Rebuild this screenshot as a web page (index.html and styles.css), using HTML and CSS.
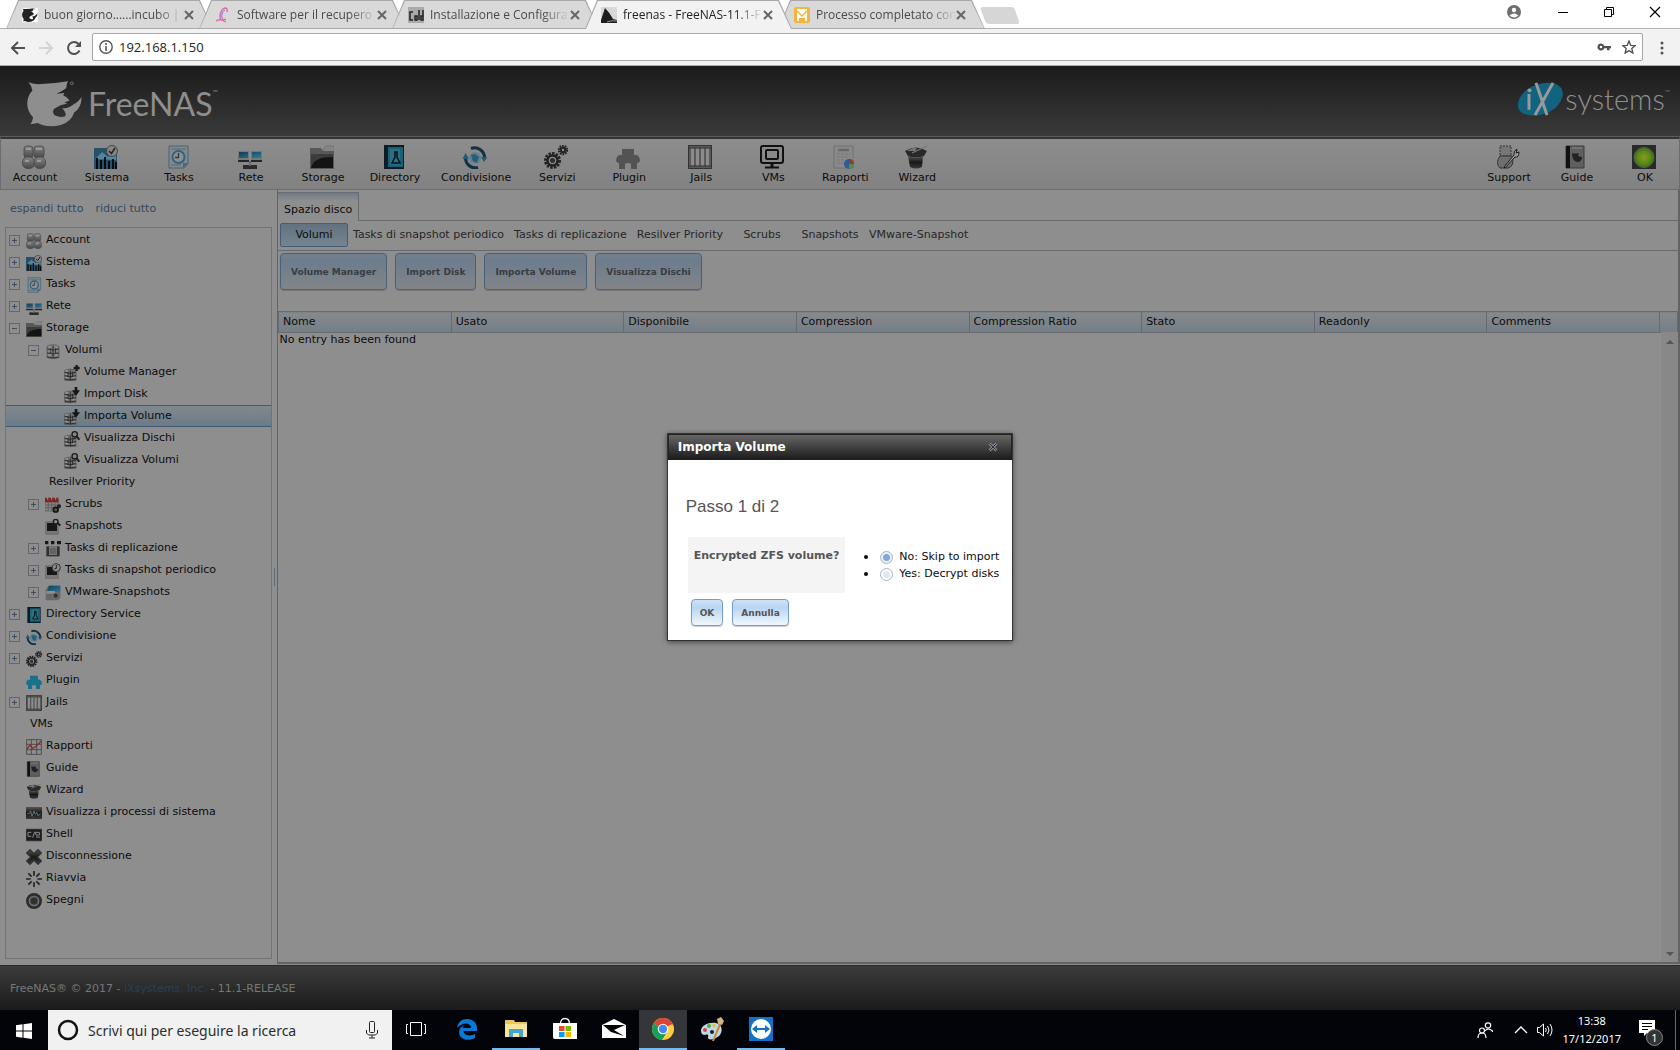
FILE: index.html
```html
<!DOCTYPE html>
<html lang="it">
<head>
    <meta charset="UTF-8">
    <meta name="viewport" content="width=device-width, initial-scale=1.0">
    <title>freenas - FreeNAS-11.1-RELEASE</title>
    <link rel="stylesheet" href="styles.css">
</head>
<body>
    <!-- icon set shared by the menu and the tree -->
    <svg class="sprite" width="0" height="0" aria-hidden="true">
        <defs>
            <linearGradient id="g-dark" x1="0" y1="0" x2="0" y2="1"><stop offset="0" stop-color="#555"/><stop offset=".5" stop-color="#181818"/><stop offset="1" stop-color="#3a3a3a"/></linearGradient>
            <linearGradient id="g-grey" x1="0" y1="0" x2="0" y2="1"><stop offset="0" stop-color="#858585"/><stop offset="1" stop-color="#484848"/></linearGradient>
            <linearGradient id="g-blue" x1="0" y1="0" x2="1" y2="1"><stop offset="0" stop-color="#123c52"/><stop offset="1" stop-color="#2a7d9c"/></linearGradient>
            <radialGradient id="g-led"><stop offset="0" stop-color="#8a991f"/><stop offset=".6" stop-color="#5c8c16"/><stop offset="1" stop-color="#3f6d16"/></radialGradient>
        </defs>
        <symbol id="i-account" viewBox="0 0 24 24">
            <g fill="url(#g-grey)" stroke="#454545" stroke-width=".8"><rect x="2" y="1" width="9" height="12" rx="3"/><rect x="12" y="1" width="10" height="12" rx="3"/><rect x=".5" y="12" width="12" height="11.500" rx="5"/><rect x="12" y="12" width="11.500" height="11.500" rx="5"/></g>
            <path d="M4 4h5M14 4h6M3 16h4M15 16h4" stroke="#999" stroke-width="2"/>
        </symbol>
        <symbol id="i-sistema" viewBox="0 0 24 24">
            <path d="M0 3h23v21H0z" fill="#27516b"/><path d="M1 14L8 7l6 5 8-6v9z" fill="#5186a0"/>
            <path d="M2 24V13h2v11M6 24V15h2v9M10 24V12h2v12M14 24V16h2v8M18 24V14h2v10M21 24V17h2v7" fill="#0c0c0c"/>
            <circle cx="18" cy="6" r="5.500" fill="#858585" stroke="#444"/><path d="M15 6l2.500 2.500L21 3" fill="none" stroke="#222" stroke-width="1.500"/>
        </symbol>
        <symbol id="i-tasks" viewBox="0 0 24 24">
            <path d="M3 1h19v18l-4 4H3z" fill="#83898c" stroke="#4a6270"/><path d="M5 4h15M5 20h10" stroke="#4f6b79"/>
            <circle cx="12.500" cy="12" r="6" fill="#8c9294" stroke="#2e647f" stroke-width="2"/><path d="M12.500 8v4.500H9" fill="none" stroke="#333" stroke-width="1.300"/><path d="M22 18h-5v5z" fill="#2b6f8e"/>
        </symbol>
        <symbol id="i-rete" viewBox="0 0 24 24">
            <path d="M0 6h11v9H0zM13 6h11v9H13z" fill="#777"/><path d="M1 7h9v6H1zM14 7h9v6h-9z" fill="url(#g-blue)"/>
            <path d="M0 15h11v2H0zM13 15h11v2H13z" fill="#262626"/><path d="M5 20h14v4H5z" fill="#2a2a2a"/><path d="M11 16h2v5h-2z" fill="#666"/>
        </symbol>
        <symbol id="i-storage" viewBox="0 0 24 24">
            <path d="M14 3l2-2h8v8H13z" fill="#858585" stroke="#666" stroke-width=".6"/><path d="M0 3h11l2 3h11v18H0z" fill="#585858"/>
            <path d="M1 9h22v14H1z" fill="#3c3c3c"/><path d="M1 23c2-8 9-11 22-11v11z" fill="#141414"/>
        </symbol>
        <symbol id="i-directory" viewBox="0 0 24 24">
            <path d="M2 0h20v24H2z" fill="#0d1c24"/><path d="M6 2h15v20H6z" fill="#176078"/><path d="M8 4h10v16H8z" fill="#2a7186"/>
            <path d="M12 7h4M13 7v5l-3 6h8l-3-6V7" fill="none" stroke="#101010" stroke-width="1.500"/>
        </symbol>
        <symbol id="i-condivisione" viewBox="0 0 24 24">
            <circle cx="12" cy="13" r="6" fill="#6b7f89"/><path d="M8 10l4-1 4 3-2 6-4-2z" fill="#1f6181"/>
            <path d="M8 3.500a10 10 0 0 1 13.500 10M15 22.500A10 10 0 0 1 2.500 12" fill="none" stroke="#103243" stroke-width="3"/>
            <path d="M18 12h6.500l-3.500 5zM-.5 14H6L2.500 8z" fill="#1c5c7c"/>
        </symbol>
        <symbol id="i-servizi" viewBox="0 0 24 24">
            <g fill="none" stroke="#222"><circle cx="8.500" cy="15.500" r="7" stroke-width="3" stroke-dasharray="2.400 1.200"/><circle cx="8.500" cy="15.500" r="5" stroke-width="2.500"/><circle cx="8.500" cy="15.500" r="2" fill="#333"/><circle cx="19" cy="5" r="4" stroke-width="2.500" stroke-dasharray="1.600 .9"/><circle cx="19" cy="5" r="2.200" stroke-width="2"/></g>
        </symbol>
        <symbol id="i-plugin" viewBox="0 0 24 24">
            <path fill="currentColor" d="M6 4h12v6h3q3 2 3 6-1 2-3 2v6h-6v-5q-3-2-6 0v5H3v-6q-2 0-3-2 0-4 3-6h3z"/>
        </symbol>
        <symbol id="i-jails" viewBox="0 0 24 24">
            <path d="M0 0h24v24H0z" fill="#5a5a5a"/><path d="M3 3h3v18H3zM8 3h3v18H8zM13 3h3v18h-3zM18 3h3v18h-3z" fill="#8b8b8b"/>
            <path d="M.5.5h23v23H.5zM1 3h22M1 21h22" fill="none" stroke="#333"/>
        </symbol>
        <symbol id="i-vms" viewBox="0 0 24 24">
            <g fill="none" stroke="#111"><rect x="1" y="1" width="22" height="17" rx="2" stroke-width="2"/><rect x="6" y="5" width="12" height="9" rx="1" stroke-width="2"/><path d="M5 22.500h14" stroke-width="2"/><path d="M12 18v4" stroke-width="3"/></g>
        </symbol>
        <symbol id="i-rapporti" viewBox="0 0 24 24">
            <path d="M2 1h19v22H2z" fill="#898989" stroke="#707070"/><path d="M6 5h11" stroke="#686868" stroke-width="2.500"/><path d="M5 9h13M5 12h13M5 15h8M5 18h7" stroke="#777" stroke-dasharray="3 1"/>
            <circle cx="17" cy="19" r="5" fill="#2d5d92"/><path d="M17 19v-5a5 5 0 0 1 5 5z" fill="#963a37"/><path d="M17 19h5a5 5 0 0 1-5 5z" fill="#578d46"/>
        </symbol>
        <symbol id="i-chart" viewBox="0 0 24 24">
            <path d="M1 1h22v22H1zM1 8h22M1 16h22M8 1v22M16 1v22" fill="none" stroke="#444" stroke-width="1.300"/><path d="M1 16l5-7 4 5 5-3 8-8" fill="none" stroke="#8d2d2b" stroke-width="2"/>
        </symbol>
        <symbol id="i-wizard" viewBox="0 0 24 24">
            <path d="M1 6q11-7 22 0l-3 5q-8 3-16 0z" fill="#292929"/><path d="M4 11q8 3 15 0l-1 11q-6 3-12 0z" fill="url(#g-dark)"/><path d="M3 6q7-4 10-3l-2 3z" fill="#777"/><path d="M8 8L23 1" stroke="#777" stroke-width="1.300"/>
        </symbol>
        <symbol id="i-guide" viewBox="0 0 24 24">
            <path d="M2 1h18v22H2z" fill="#5f5f5f" stroke="#3c3c3c"/><path d="M2 1h4v22H2z" fill="#111"/><path d="M8 8q3 1 7 0l-1 3 4 1q0 5-5 5-5-1-5-9z" fill="#222"/><path d="M8 3h10" stroke="#8a8a8a"/>
        </symbol>
        <symbol id="i-support" viewBox="0 0 24 24">
            <path d="M4 1h11v10H4z" fill="#777" stroke="#333" stroke-dasharray="2 1"/><path d="M4 11h12q3 10-4 12H4q-5-5 0-12z" fill="#6f6f6f" stroke="#333"/>
            <path d="M8 22L18 10q-1-4 3-6l-1 4 3-1q0 6-4 5L9 23z" fill="#999" stroke="#1c1c1c"/>
        </symbol>
        <symbol id="i-led" viewBox="0 0 24 24">
            <path d="M0 0h24v24H0z" fill="#292929"/><circle cx="12" cy="12.500" r="10" fill="url(#g-led)" stroke="#526052"/>
        </symbol>
        <symbol id="i-disks" viewBox="0 0 24 24">
            <path d="M3 5q9-5 18 0v17q-9 3-18 0z" fill="#777" stroke="#555"/><path d="M3 9q9 3 18 0M3 15q9 3 18 0M3 21q9 3 18 0M12 5v17M8 8v8M16 8v8" fill="none" stroke="#333" stroke-width="1.500"/><path d="M5 6h4M5 12h3M5 18h4M15 6h4M17 12h2M15 18h4" stroke="#999" stroke-width="2"/>
        </symbol>
        <symbol id="i-vol" viewBox="0 0 24 24">
            <path d="M1 8q8-4 17 0v15q-9 2-17 0z" fill="#737373" stroke="#555"/><path d="M1 11q8 3 17 0M1 16q8 3 17 0M1 21q8 3 17 0M9.500 8v15M6 10v8M13 10v8" fill="none" stroke="#2c2c2c" stroke-width="1.500"/><path d="M2 9h4M2 14h3M2 19h4M13 19h4" stroke="#999" stroke-width="2"/>
        </symbol>
        <symbol id="i-vol-add" viewBox="0 0 24 24"><use href="#i-vol"/><path d="M19 0v9M14.500 4.500h9" stroke="#1a1a1a" stroke-width="3.500"/></symbol>
        <symbol id="i-vol-imp" viewBox="0 0 24 24"><use href="#i-vol"/><path d="M16 0h4v5h4l-6 8-6-8h4z" fill="#151515"/></symbol>
        <symbol id="i-vol-view" viewBox="0 0 24 24"><use href="#i-vol"/><circle cx="16" cy="5" r="4" fill="#858585" stroke="#1a1a1a" stroke-width="2"/><path d="M19 8l4 5" stroke="#1a1a1a" stroke-width="3"/></symbol>
        <symbol id="i-scrubs" viewBox="0 0 24 24">
            <path d="M0 3h20v18H0z" fill="#858585" stroke="#555"/><path d="M0 1h20v7H0z" fill="#812525"/><path d="M4 0v4M10 0v4M16 0v4" stroke="#999" stroke-width="1.500"/><path d="M1 12h18M1 16h18M5 8v12M10 8v12M15 8v12" stroke="#555"/><circle cx="16" cy="19" r="3.500" fill="#555" stroke="#151515" stroke-width="2.500"/><circle cx="21" cy="14" r="2" fill="#555" stroke="#151515" stroke-width="2"/>
        </symbol>
        <symbol id="i-snap" viewBox="0 0 24 24"><path d="M1 4h19v19H1z" fill="#777" stroke="#666"/><path d="M3 6h15v12H3z" fill="#171717"/></symbol>
        <symbol id="i-snap-view" viewBox="0 0 24 24"><use href="#i-snap"/><circle cx="16" cy="4" r="3.500" fill="#888" stroke="#1a1a1a" stroke-width="2"/><path d="M19 6l4 4" stroke="#1a1a1a" stroke-width="3"/></symbol>
        <symbol id="i-snap-time" viewBox="0 0 24 24"><use href="#i-snap"/><circle cx="17" cy="7" r="6" fill="#8a8a8a" stroke="#333" stroke-width="1.500"/><path d="M17 3v5l-3 1" fill="none" stroke="#222" stroke-width="1.500"/></symbol>
        <symbol id="i-repl" viewBox="0 0 24 24"><path d="M0 0h5v5H0zM9 0h5v5H9zM18 0h6v5h-6z" fill="#161616"/><path d="M2 8h20v15H2z" fill="#303030"/><path d="M6 8h12v13H6z" fill="#7b7b7b"/><path d="M7 12h10M7 15h10M7 18h10" stroke="#333"/></symbol>
        <symbol id="i-vmware" viewBox="0 0 24 24"><path d="M1 7l4-6h18v19l-4 3H1z" fill="#686868"/><path d="M6 1h17v10H3z" fill="url(#g-blue)"/><path d="M2 9h13v4H2z" fill="#8f8f8f"/><circle cx="16" cy="16" r="4" fill="#333" stroke="#888"/></symbol>
        <symbol id="i-proc" viewBox="0 0 24 24"><path d="M0 3h24v18H0z" fill="url(#g-dark)"/><path d="M2 13h3l2-4 2 8 3-8 2 5 2-3 2 5 4-3" fill="none" stroke="#59777a" stroke-width="1.500"/></symbol>
        <symbol id="i-shell" viewBox="0 0 24 24"><path d="M0 3h24v18H0z" fill="#1c1c1c" stroke="#555"/><path d="M8 8H3v6h5M13 7l-3 9M14 8h6v4h-5zM15 15h6" fill="none" stroke="#8b8b8b" stroke-width="1.500"/></symbol>
        <symbol id="i-logout" viewBox="0 0 24 24"><path d="M6 1l6 6 6-6 5 5-6 6 6 6-5 5-6-6-6 6-5-5 6-6-6-6z" fill="url(#g-dark)" stroke="#333" stroke-width="2" stroke-linejoin="round"/></symbol>
        <symbol id="i-reboot" viewBox="0 0 24 24"><path d="M12 0v7M12 17v7M0 12h7M17 12h7M3.500 3.500l5 5M15.500 15.500l5 5M20.500 3.500l-5 5M8.500 15.500l-5 5" stroke="#242424" stroke-width="2.500"/></symbol>
        <symbol id="i-halt" viewBox="0 0 24 24"><circle cx="12" cy="12" r="10" fill="#8b8b8b" stroke="#2c2c2c" stroke-width="4"/><circle cx="12" cy="12" r="6" fill="#303030" stroke="#555" stroke-width="2"/></symbol>
        <symbol id="i-shark" viewBox="0 0 156 140" preserveAspectRatio="none">
            <path fill="currentColor" d="M4 7Q16 14 40 12 80 11 114 4 108 20 110 24 98 34 82 41L104 39 101 46Q114 52 118 62L104 66 112 70Q92 74 78 84 68 92 76 104 92 114 106 108 112 100 98 84 116 86 128 74 144 66 152 50 152 84 132 96 122 126 94 134 58 144 30 128L10 132Q16 120 17 112-4 88 2 58 6 40 15 32 14 18 4 7z"/>
            <circle cx="125" cy="10" r="4" fill="none" stroke="currentColor" stroke-width="2"/>
        </symbol>
    </svg>

    <div class="browser">
        <div class="tabstrip">
            <div class="tab">
                <svg class="favicon" viewBox="0 0 156 140"><path fill="#fff" d="M0 0h156v140H0z"/><use href="#i-shark" color="#222"/></svg>
                <span class="tab-title">buon giorno......incubo | F</span>
                <button class="tab-close" aria-label="Chiudi"><svg viewBox="0 0 10 10"><path d="M1 1l8 8M9 1L1 9"/></svg></button>
            </div>
            <div class="tab">
                <svg class="favicon" viewBox="0 0 16 16"><path d="M12 5q1-4-2-4-4 1-5 8 0 5 3 4M1 14q4-3 10 1" fill="none" stroke="#e66a9c" stroke-width="1.500"/><path d="M10 3Q6 5 7 11q1 3 4 1" fill="none" stroke="#7d77dc"/></svg>
                <span class="tab-title">Software per il recupero</span>
                <button class="tab-close" aria-label="Chiudi"><svg viewBox="0 0 10 10"><path d="M1 1l8 8M9 1L1 9"/></svg></button>
            </div>
            <div class="tab">
                <svg class="favicon" viewBox="0 0 16 16"><path d="M0 0h16v16H0z" fill="#aaa"/><path d="M5 5H2v8h3M7 9h2v4H7zM11 3v10M13 9h2v4h-2zM15 3v7" fill="none" stroke="#222" stroke-width="1.500"/></svg>
                <span class="tab-title">Installazione e Configura</span>
                <button class="tab-close" aria-label="Chiudi"><svg viewBox="0 0 10 10"><path d="M1 1l8 8M9 1L1 9"/></svg></button>
            </div>
            <div class="tab tab-active">
                <svg class="favicon" viewBox="0 0 16 16"><path d="M0 0h16v16H0z" fill="#d8d8d8"/><path d="M0 16V13L4 1q5 5 8 11l4 1v3z" fill="#1d1d1d"/><path d="M6 15q5-2 10-1" stroke="#999" fill="none"/></svg>
                <span class="tab-title">freenas - FreeNAS-11.1-F</span>
                <button class="tab-close" aria-label="Chiudi"><svg viewBox="0 0 10 10"><path d="M1 1l8 8M9 1L1 9"/></svg></button>
            </div>
            <div class="tab">
                <svg class="favicon" viewBox="0 0 16 16"><rect width="16" height="16" rx="2" fill="#f5b53d"/><path d="M3 2h10v12h-2v-3H5v3H3z" fill="#fff"/><path d="M3 4l5 5 5-5" fill="none" stroke="#f5b53d" stroke-width="1.500"/></svg>
                <span class="tab-title">Processo completato con</span>
                <button class="tab-close" aria-label="Chiudi"><svg viewBox="0 0 10 10"><path d="M1 1l8 8M9 1L1 9"/></svg></button>
            </div>
            <button class="new-tab" aria-label="Nuova scheda"></button>
            <div class="window-buttons">
                <button aria-label="Profilo"><svg viewBox="0 0 14 14"><circle cx="7" cy="7" r="7" fill="#6e6e6e"/><circle cx="7" cy="5" r="2.200" fill="#fff"/><path d="M2.500 10.500q4.500-4 9 0-4.500 4-9 0z" fill="#fff"/></svg></button>
                <button aria-label="Riduci a icona"><svg viewBox="0 0 14 14"><path d="M2 7.500h10" stroke="#000"/></svg></button>
                <button aria-label="Ripristina"><svg viewBox="0 0 14 14"><path d="M2.500 4.500h7v7h-7zM4.500 4.500v-2h7v7h-2" fill="none" stroke="#000"/></svg></button>
                <button aria-label="Chiudi finestra"><svg viewBox="0 0 14 14"><path d="M2 2l10 10M12 2L2 12" stroke="#000" stroke-width="1.200"/></svg></button>
            </div>
        </div>
        <div class="toolbar">
            <button class="tool" aria-label="Indietro"><svg viewBox="0 0 16 16"><path d="M15 8H2M8 2L2 8l6 6" fill="none" stroke="#4f4f4f" stroke-width="2"/></svg></button>
            <button class="tool" aria-label="Avanti"><svg viewBox="0 0 16 16"><path d="M1 8h13M8 2l6 6-6 6" fill="none" stroke="#d3d3d3" stroke-width="2"/></svg></button>
            <button class="tool" aria-label="Ricarica"><svg viewBox="0 0 16 16"><path d="M13.500 10.500A6 6 0 1 1 12.500 4" fill="none" stroke="#4f4f4f" stroke-width="2"/><path d="M15 1v6H9z" fill="#4f4f4f"/></svg></button>
            <div class="address">
                <svg viewBox="0 0 14 14"><circle cx="7" cy="7" r="6.200" fill="none" stroke="#555" stroke-width="1.400"/><path d="M7 6v5M7 3v2" stroke="#555" stroke-width="1.600"/></svg>
                <input class="url" type="text" aria-label="Indirizzo" value="192.168.1.150">
                <svg viewBox="0 0 14 14"><path d="M4 3.500a3.500 3.500 0 1 0 3.300 4.700H10v2h2.500v-2H14V6H7.300A3.500 3.500 0 0 0 4 3.500zM4 5.700a1.300 1.300 0 1 1 0 2.600 1.300 1.300 0 0 1 0-2.600z" fill="#4f4f4f"/></svg>
                <svg viewBox="0 0 14 14"><path d="M7 1l1.700 4.300 4.600.3-3.500 3 1.100 4.500L7 10.600l-3.900 2.500 1.100-4.500-3.500-3 4.600-.3z" fill="none" stroke="#4f4f4f" stroke-width="1.300"/></svg>
            </div>
            <button class="tool tool-menu" aria-label="Menu"><svg viewBox="0 0 16 16"><g fill="#4f4f4f"><circle cx="8" cy="3" r="1.500"/><circle cx="8" cy="8" r="1.500"/><circle cx="8" cy="13" r="1.500"/></g></svg></button>
        </div>
    </div>

    <div class="page">
        <header class="banner">
            <div class="brand"><svg class="shark"><use href="#i-shark"/></svg><span class="brand-name">FreeNAS<sup>™</sup></span></div>
            <div class="ix">
                <svg class="ix-mark" viewBox="0 0 46 38" preserveAspectRatio="none"><path d="M1 26C1 10 19 0 33 1c12 1 16 10 10 21S23 38 12 36C5 35 1 31 1 26z" fill="#11637f"/><path d="M12 13v17M19 1l11 35M36 1L18 36" stroke="#999" stroke-width="3"/><circle cx="12.500" cy="9" r="2" fill="#999"/></svg>
                <span class="ix-name">systems<sup>™</sup></span>
            </div>
        </header>

        <nav class="menu">
            <a href="#account"><svg><use href="#i-account"/></svg>Account</a>
            <a href="#sistema"><svg><use href="#i-sistema"/></svg>Sistema</a>
            <a href="#tasks"><svg><use href="#i-tasks"/></svg>Tasks</a>
            <a href="#rete"><svg><use href="#i-rete"/></svg>Rete</a>
            <a href="#storage"><svg><use href="#i-storage"/></svg>Storage</a>
            <a href="#directory"><svg><use href="#i-directory"/></svg>Directory</a>
            <a href="#condivisione"><svg><use href="#i-condivisione"/></svg>Condivisione</a>
            <a href="#servizi"><svg><use href="#i-servizi"/></svg>Servizi</a>
            <a href="#plugin"><svg class="plugin-grey"><use href="#i-plugin"/></svg>Plugin</a>
            <a href="#jails"><svg><use href="#i-jails"/></svg>Jails</a>
            <a href="#vms"><svg><use href="#i-vms"/></svg>VMs</a>
            <a href="#rapporti"><svg><use href="#i-rapporti"/></svg>Rapporti</a>
            <a href="#wizard"><svg><use href="#i-wizard"/></svg>Wizard</a>
            <span class="menu-right">
                <a href="#support"><svg><use href="#i-support"/></svg>Support</a>
                <a href="#guide"><svg><use href="#i-guide"/></svg>Guide</a>
                <a href="#alert"><svg><use href="#i-led"/></svg>OK</a>
            </span>
        </nav>

        <main class="main">
            <aside class="sidebar">
                <div class="tree-links"><a href="#expand">espandi tutto</a><a href="#collapse">riduci tutto</a></div>
                <ul class="tree">
                    <li><button class="exp plus" aria-label="Espandi"></button><svg><use href="#i-account"/></svg><a href="#t1">Account</a></li>
                    <li><button class="exp plus" aria-label="Espandi"></button><svg><use href="#i-sistema"/></svg><a href="#t2">Sistema</a></li>
                    <li><button class="exp plus" aria-label="Espandi"></button><svg><use href="#i-tasks"/></svg><a href="#t3">Tasks</a></li>
                    <li><button class="exp plus" aria-label="Espandi"></button><svg><use href="#i-rete"/></svg><a href="#t4">Rete</a></li>
                    <li><button class="exp" aria-label="Riduci"></button><svg><use href="#i-storage"/></svg><a href="#t5">Storage</a></li>
                    <li class="level-2"><button class="exp" aria-label="Riduci"></button><svg><use href="#i-disks"/></svg><a href="#t6">Volumi</a></li>
                    <li class="level-3 leaf"><svg><use href="#i-vol-add"/></svg><a href="#t7">Volume Manager</a></li>
                    <li class="level-3 leaf"><svg><use href="#i-vol-imp"/></svg><a href="#t8">Import Disk</a></li>
                    <li class="level-3 leaf selected"><svg><use href="#i-vol-imp"/></svg><a href="#t9">Importa Volume</a></li>
                    <li class="level-3 leaf"><svg><use href="#i-vol-view"/></svg><a href="#t10">Visualizza Dischi</a></li>
                    <li class="level-3 leaf"><svg><use href="#i-vol-view"/></svg><a href="#t11">Visualizza Volumi</a></li>
                    <li class="level-2 leaf"><a href="#t12">Resilver Priority</a></li>
                    <li class="level-2"><button class="exp plus" aria-label="Espandi"></button><svg><use href="#i-scrubs"/></svg><a href="#t13">Scrubs</a></li>
                    <li class="level-2 leaf"><svg><use href="#i-snap-view"/></svg><a href="#t14">Snapshots</a></li>
                    <li class="level-2"><button class="exp plus" aria-label="Espandi"></button><svg><use href="#i-repl"/></svg><a href="#t15">Tasks di replicazione</a></li>
                    <li class="level-2"><button class="exp plus" aria-label="Espandi"></button><svg><use href="#i-snap-time"/></svg><a href="#t16">Tasks di snapshot periodico</a></li>
                    <li class="level-2"><button class="exp plus" aria-label="Espandi"></button><svg><use href="#i-vmware"/></svg><a href="#t17">VMware-Snapshots</a></li>
                    <li><button class="exp plus" aria-label="Espandi"></button><svg><use href="#i-directory"/></svg><a href="#t18">Directory Service</a></li>
                    <li><button class="exp plus" aria-label="Espandi"></button><svg><use href="#i-condivisione"/></svg><a href="#t19">Condivisione</a></li>
                    <li><button class="exp plus" aria-label="Espandi"></button><svg><use href="#i-servizi"/></svg><a href="#t20">Servizi</a></li>
                    <li class="leaf"><svg class="plugin-blue"><use href="#i-plugin"/></svg><a href="#t21">Plugin</a></li>
                    <li><button class="exp plus" aria-label="Espandi"></button><svg><use href="#i-jails"/></svg><a href="#t22">Jails</a></li>
                    <li class="leaf"><a href="#t23">VMs</a></li>
                    <li class="leaf"><svg><use href="#i-chart"/></svg><a href="#t24">Rapporti</a></li>
                    <li class="leaf"><svg><use href="#i-guide"/></svg><a href="#t25">Guide</a></li>
                    <li class="leaf"><svg><use href="#i-wizard"/></svg><a href="#t26">Wizard</a></li>
                    <li class="leaf"><svg><use href="#i-proc"/></svg><a href="#t27">Visualizza i processi di sistema</a></li>
                    <li class="leaf"><svg><use href="#i-shell"/></svg><a href="#t28">Shell</a></li>
                    <li class="leaf"><svg><use href="#i-logout"/></svg><a href="#t29">Disconnessione</a></li>
                    <li class="leaf"><svg><use href="#i-reboot"/></svg><a href="#t30">Riavvia</a></li>
                    <li class="leaf"><svg><use href="#i-halt"/></svg><a href="#t31">Spegni</a></li>
                </ul>
            </aside>
            <div class="splitter"><span></span></div>
            <section class="content">
                <div class="pane-tabs"><a class="pane-tab" href="#spazio">Spazio disco</a></div>
                <div class="pane">
                    <div class="subtabs">
                        <a class="current" href="#volumi">Volumi</a>
                        <a href="#periodico">Tasks di snapshot periodico</a>
                        <a href="#replicazione">Tasks di replicazione</a>
                        <a href="#resilver">Resilver Priority</a>
                        <a href="#scrubs">Scrubs</a>
                        <a href="#snapshots">Snapshots</a>
                        <a href="#vmware">VMware-Snapshot</a>
                    </div>
                    <div class="actions">
                        <button>Volume Manager</button>
                        <button>Import Disk</button>
                        <button>Importa Volume</button>
                        <button>Visualizza Dischi</button>
                    </div>
                    <table class="grid">
                        <thead>
                            <tr><th>Nome</th><th>Usato</th><th>Disponibile</th><th>Compression</th><th>Compression Ratio</th><th>Stato</th><th>Readonly</th><th>Comments</th><th class="grid-end"></th></tr>
                        </thead>
                        <tbody>
                            <tr><td colspan="9">No entry has been found</td></tr>
                        </tbody>
                    </table>
                    <div class="scrollbar"><span class="arrow-up"></span><span class="arrow-down"></span></div>
                </div>
            </section>
        </main>

        <footer class="footer">
            <p>FreeNAS® © 2017 - <a href="#ixsystems">iXsystems, Inc.</a> - 11.1-RELEASE</p>
        </footer>

        <div class="overlay">
            <div class="dialog" role="dialog" aria-labelledby="dialog-title">
                <div class="dialog-bar">
                    <span id="dialog-title">Importa Volume</span>
                    <button class="dialog-close" aria-label="Chiudi"><svg viewBox="0 0 10 10"><path d="M1.500 1.500l7 7M8.500 1.500l-7 7" stroke="#7b8793" stroke-width="3"/><path d="M1.500 1.500l7 7M8.500 1.500l-7 7" stroke="#2c3136"/></svg></button>
                </div>
                <form class="dialog-body">
                    <h2>Passo 1 di 2</h2>
                    <div class="question">
                        <div class="question-label">Encrypted ZFS volume?</div>
                        <ul>
                            <li><input type="radio" name="encrypted" id="enc-no" checked><label for="enc-no">No: Skip to import</label></li>
                            <li><input type="radio" name="encrypted" id="enc-yes"><label for="enc-yes">Yes: Decrypt disks</label></li>
                        </ul>
                    </div>
                    <div class="dialog-buttons">
                        <button type="button">OK</button>
                        <button type="button">Annulla</button>
                    </div>
                </form>
            </div>
        </div>
    </div>

    <div class="taskbar">
        <button class="start" aria-label="Start"><svg viewBox="0 0 16 16"><path d="M0 2.200L6.500 1.300v6.200H0zM7.500 1.200L16 0v7.500H7.500zM0 8.500h6.500v6.200L0 13.800zM7.500 8.500H16V16l-8.500-1.200z" fill="#fff"/></svg></button>
        <div class="cortana">
            <svg class="ring" viewBox="0 0 22 22"><circle cx="11" cy="11" r="9" fill="none" stroke="#111" stroke-width="2.500"/></svg>
            <input type="text" aria-label="Ricerca" placeholder="Scrivi qui per eseguire la ricerca">
            <svg class="mic" viewBox="0 0 12 18"><rect x="3.500" y=".5" width="5" height="11" rx="1" fill="none" stroke="#222"/><path d="M.5 9v3l2 2h7l2-2V9M6 14v3M3 17h6" fill="none" stroke="#222"/></svg>
        </div>
        <div class="apps">
            <button aria-label="Visualizzazione attività"><svg viewBox="0 0 24 24"><path d="M6.500 5.500h11v13h-11zM4 7.500H2.500v9H4M20 7.500h1.500v9H20" fill="none" stroke="#fff"/></svg></button>
            <button aria-label="Edge"><svg viewBox="0 0 24 24"><path d="M2 11C3 5 7 2 12 2c6 0 10 4 10 9v3H8.500c0 4 6 6 11.500 3v4C12 25 4 22 4 15c0-3 2-5 5-6.500-.7 1-1 1.500-1 2.500h8c0-6-9-6-14 0z" fill="#0a78d6"/></svg></button>
            <button class="open" aria-label="Esplora file"><svg viewBox="0 0 24 24"><path d="M1 3h9l1 2h12v15H1z" fill="#e9c75f"/><path d="M1 7h22v13H1z" fill="#fbe59a"/><path d="M5 20v-8h14v8h-4v-4H9v4z" fill="#42a6cf"/></svg></button>
            <button aria-label="Store"><svg viewBox="0 0 24 24"><path d="M0 6h24v16H2q-2 0-2-2z" fill="#fff"/><path d="M7.500 7q0-5.500 4.500-5.500T16.500 7" fill="none" stroke="#fff" stroke-width="1.300"/><path d="M6 9h5.500v5H6z" fill="#e74b23"/><path d="M12.500 9H18v5h-5.500z" fill="#7db700"/><path d="M6 15h5.500v5H6z" fill="#00a1ee"/><path d="M12.500 15H18v5h-5.500z" fill="#fdb900"/></svg></button>
            <button aria-label="Posta"><svg viewBox="0 0 24 24"><path d="M0 8l12-6 12 6v13H0z" fill="#fff"/><path d="M1 8h22l-11 5 10 6-13-4z" fill="#000"/></svg></button>
            <button class="open active" aria-label="Chrome"><svg viewBox="0 0 24 24"><circle cx="12" cy="12" r="11" fill="#fc4"/><path d="M12 12L2.500 6.500A11 11 0 0 1 21.500 6.500z" fill="#da4537"/><path d="M12 12L2.500 6.500A11 11 0 0 0 11 23l5-8z" fill="#189e57"/><path d="M12 6.500h9.500l.5 1h-10z" fill="#da4537"/><circle cx="12" cy="12" r="5.300" fill="#fff"/><circle cx="12" cy="12" r="4.200" fill="#4a86ee"/></svg></button>
            <button aria-label="Paint"><svg viewBox="0 0 24 24"><path d="M1 14C1 8 9 5 16 6c7 2 7 9 3 13-6 5-12 4-11 1 1-2 0-3-3-2-2 0-4-1-4-4z" fill="#bedaea"/><circle cx="5" cy="13" r="2" fill="#d44545"/><circle cx="9" cy="9" r="2" fill="#55a84a"/><circle cx="14" cy="8.500" r="1.700" fill="#e9bd3e"/><circle cx="12" cy="15" r="2" fill="#16202a"/><path d="M12 24l7-17 2 1-7 16z" fill="#cd8735"/><path d="M18 7l-1-5 4-2 3 4-2 4z" fill="#dbb27f"/></svg></button>
            <button class="open" aria-label="TeamViewer"><svg viewBox="0 0 24 24"><path d="M0 0h24v24H0z" fill="#1570c8"/><circle cx="12" cy="12" r="10" fill="#fff"/><path d="M3 12l5-4v3h8V8l5 4-5 4v-3H8v3z" fill="#1570c8"/></svg></button>
        </div>
        <div class="tray">
            <svg viewBox="0 0 16 16"><g fill="none" stroke="#fff" stroke-width="1.200"><circle cx="11" cy="3.500" r="2.700"/><path d="M8 9q3-4 7.500 0V10"/><circle cx="5" cy="8.500" r="2.500"/><path d="M1 16q0-5 4-5t4 5"/></g></svg>
            <svg viewBox="0 0 16 16"><path d="M2 11l6-6 6 6" fill="none" stroke="#fff" stroke-width="1.300"/></svg>
            <svg viewBox="0 0 16 16"><path d="M.5 5.500h2l4-3.500v12l-4-3.500h-2zM8.500 6q1.500 2 0 4M10.500 4q3 4 0 8M13 2q4 6 0 12" fill="none" stroke="#fff"/></svg>
            <div class="clock">13:38<br>17/12/2017</div>
            <button class="notify" aria-label="Notifiche"><svg viewBox="0 0 16 16"><path d="M0 0h16v13H8l-3 3v-3H0z" fill="#fff"/><path d="M3 3.500h10M3 6.500h10M3 9.500h6" stroke="#000"/></svg><span class="badge">1</span></button>
            <span class="desktop"></span>
        </div>
    </div>
</body>
</html>
```

FILE: styles.css
```css
* {
    box-sizing: border-box;
}
body {
    margin: 0;
    min-height: 100vh;
    display: flex;
    flex-direction: column;
    font-family: "DejaVu Sans", Verdana, sans-serif;
    font-size: 11px;
    line-height: 14px;
    color: #0c0c0c;
    background: #8e8e8e;
}
a {
    color: inherit;
    text-decoration: none;
}
button {
    border: 0;
    padding: 0;
    background: none;
    font-family: inherit;
    cursor: pointer;
}
input {
    font-family: inherit;
}
ul {
    margin: 0;
    padding: 0;
    list-style: none;
}
.sprite {
    position: absolute;
}

/* browser window */
.browser {
    font-family: "Open Sans", "Noto Sans", sans-serif;
}
.tabstrip {
    display: flex;
    height: 29px;
    padding-left: 6px;
    background: #fff;
    border-bottom: 1px solid #b4b4b4;
}
.tab {
    position: relative;
    z-index: 0;
    display: flex;
    align-items: center;
    width: 207px;
    height: 29px;
    margin-right: -14px;
    padding: 0 17px 0 16px;
    color: #4a4a4a;
}
.tab::before,
.tab::after {
    content: "";
    position: absolute;
    inset: 0;
    z-index: -1;
    background: #a9a9a9;
    clip-path: polygon(0 100%, 12px 0, calc(100% - 13px) 0, 100% 100%);
}
.tab::after {
    inset: 1px;
    background: #d9d9d9;
}
.tab-active {
    z-index: 1;
    color: #222;
}
.tab-active::after {
    inset: 1px 1px 0 1px;
    background: #f2f2f2;
}
.favicon {
    flex: none;
    width: 16px;
    height: 16px;
    margin-right: 6px;
}
.tab-title {
    flex: 1;
    min-width: 0;
    white-space: nowrap;
    font-size: 12px;
    line-height: 18px;
    mask-image: linear-gradient(to right, #000 80%, transparent);
}
.tab-close {
    flex: none;
    width: 10px;
    height: 10px;
    margin: 0 2px 0 0;
}
.tab-close svg {
    display: block;
    stroke: #666;
    stroke-width: 2;
}
.new-tab {
    width: 34px;
    height: 17px;
    margin: 7px 0 0 12px;
    background: #d6d6d6;
    border-radius: 3px;
    transform: skewX(20deg);
}
.window-buttons {
    display: flex;
    margin: 0 2px 0 auto;
}
.window-buttons button {
    width: 46px;
    height: 27px;
}
.window-buttons button:first-child {
    margin-right: 3px;
}
.window-buttons svg {
    width: 14px;
    height: 14px;
}
.toolbar {
    display: flex;
    align-items: center;
    height: 37px;
    padding: 0 4px;
    background: #f2f2f2;
    border-bottom: 1px solid #aaa;
}
.tool {
    width: 28px;
    height: 28px;
}
.tool svg {
    width: 16px;
    height: 16px;
    vertical-align: middle;
}
.address {
    flex: 1;
    display: flex;
    align-items: center;
    gap: 6px;
    height: 28px;
    margin-left: 4px;
    padding: 0 6px;
    background: #fff;
    border: 1px solid #a6a6a6;
    border-radius: 2px;
}
.address svg {
    width: 14px;
    height: 14px;
}
.address svg:last-child {
    margin-left: 5px;
}
.url {
    flex: 1;
    border: 0;
    padding: 0;
    font-size: 13px;
    color: #222;
    outline: none;
}
.tool-menu {
    margin-left: 5px;
}

/* banner */
.page {
    position: relative;
    flex: 1;
    display: flex;
    flex-direction: column;
}
.banner {
    display: flex;
    justify-content: space-between;
    height: 71px;
    padding: 0 10px 0 27px;
    color: #8e8e8e;
    background: linear-gradient(#1b1b1b, #3a3a3a);
    border-bottom: 1px solid #5b5b5b;
    font-family: Lato, sans-serif;
}
.brand,
.ix {
    display: flex;
    align-items: center;
}
.brand {
    padding-top: 4px;
}
.shark {
    width: 56px;
    height: 47px;
    margin-right: 5px;
}
.brand-name {
    font-size: 32px;
    line-height: 47px;
}
.ix {
    padding-bottom: 4px;
}
.ix-name {
    font-size: 29px;
    font-weight: 300;
    line-height: 38px;
    margin-left: 2px;
}
.banner sup {
    font-size: 7px;
    vertical-align: top;
    line-height: 24px;
}
.ix-mark {
    width: 46px;
    height: 35px;
}

/* icon menu */
.menu {
    display: flex;
    height: 53px;
    border: 1px solid #6c6d70;
    border-top: 2px solid #343434;
    background: linear-gradient(#8d8d8d, #828282);
}
.menu a {
    display: flex;
    flex-direction: column;
    align-items: center;
    gap: 2px;
    min-width: 72px;
    padding: 6px 12px 0 8px;
}
.menu svg {
    width: 24px;
    height: 24px;
    margin-right: 3px;
}
.menu-right {
    display: flex;
    margin-left: auto;
}
.menu .menu-right a {
    min-width: 68px;
    padding: 6px 11px 0;
}
.plugin-grey {
    color: #535353;
}
.plugin-blue {
    color: #18718d;
}

/* sidebar */
.main {
    flex: 1;
    display: flex;
    padding-bottom: 1px;
}
.sidebar {
    display: flex;
    flex-direction: column;
    width: 272px;
    padding: 0 0 5px 5px;
}
.tree-links {
    display: flex;
    gap: 12px;
    height: 37px;
    padding: 12px 5px 0;
    color: #34495f;
}
.tree {
    flex: 1;
    padding-top: 1px;
    border: 1px solid #6f7276;
}
.tree li {
    display: flex;
    align-items: center;
    height: 22px;
    padding-left: 3px;
}
.tree li.leaf {
    padding-left: 20px;
}
.tree li.level-2 {
    padding-left: 22px;
}
.tree li.level-2.leaf {
    padding-left: 39px;
}
.tree li.level-3.leaf {
    padding-left: 58px;
}
.tree svg {
    width: 16px;
    height: 16px;
    margin-top: 1px;
}
.tree a {
    margin-left: 4px;
}
.tree li.selected {
    border: solid #3f5a72;
    border-width: 1px 0;
    background: linear-gradient(#808990, #6c7a87);
}
.exp {
    width: 11px;
    height: 11px;
    margin-right: 6px;
    border: 1px solid #62676f;
    background: linear-gradient(#3f4c5d, #3f4c5d) center / 5px 1px no-repeat;
}
.exp.plus {
    background: linear-gradient(#3f4c5d, #3f4c5d) center / 5px 1px no-repeat, linear-gradient(#3f4c5d, #3f4c5d) center / 1px 5px no-repeat;
}
.splitter {
    display: flex;
    align-items: center;
    width: 5px;
}
.splitter span {
    width: 1px;
    height: 18px;
    margin-left: 2px;
    background: #5c6c7b;
}

/* content pane */
.content {
    flex: 1;
    display: flex;
    flex-direction: column;
    padding-top: 2px;
    border: 2px solid #646464;
    border-width: 0 2px 2px 1px;
}
.pane-tabs {
    display: flex;
    height: 29px;
    border-bottom: 1px solid #666b70;
}
.pane-tab {
    height: 29px;
    padding: 10px 6px 0;
    border: 1px solid #666b70;
    border-width: 1px 1px 0 0;
    background: linear-gradient(#707b86, #8e8e8e 8px);
}
.pane {
    position: relative;
    flex: 1;
}
.subtabs {
    display: flex;
    height: 30px;
    padding: 2px;
    border-bottom: 1px solid #666b70;
    color: #262626;
}
.subtabs a {
    min-width: 68px;
    height: 24px;
    padding: 4px;
    border: 1px solid transparent;
    text-align: center;
}
.subtabs .current {
    border-color: #465c70;
    border-radius: 2px;
    background: linear-gradient(#64727f, #748491);
    color: #0c0c0c;
}
.actions {
    display: flex;
    gap: 8px;
    padding: 2px 2px 21px;
}
.actions button,
.dialog-buttons button {
    height: 37px;
    padding: 0 10px;
    border: 1px solid #48607a;
    border-radius: 4px;
    background: linear-gradient(#74808d, #6d7c8c 20%, #828589);
    color: #383d42;
    font-size: 9px;
    font-weight: bold;
    box-shadow: 0 1px 1px #777;
}
.grid {
    width: 100%;
    table-layout: fixed;
    border-collapse: collapse;
}
.grid th {
    height: 21px;
    padding: 0 4px;
    border: 1px solid #666b70;
    background: linear-gradient(#868a8d, #757d86);
    font-weight: normal;
    text-align: left;
}
.grid .grid-end {
    width: 18px;
}
.grid td {
    padding: 0 1px;
    height: 15px;
}
.scrollbar {
    position: absolute;
    top: 111px;
    right: 0;
    bottom: 0;
    width: 17px;
    display: flex;
    flex-direction: column;
    align-items: center;
    justify-content: space-between;
    padding: 8px 0 6px;
    background: #888;
}
.arrow-up,
.arrow-down {
    border: 4px solid transparent;
    border-top: 0;
    border-bottom-color: #555;
}
.arrow-down {
    border-top: 4px solid #555;
    border-bottom: 0;
}

/* footer */
.footer {
    height: 45px;
    padding: 16px 10px 0;
    border-top: 1px solid #292929;
    background: linear-gradient(#3c3c3c, #1a1a1b);
    color: #777;
}
.footer p {
    margin: 0;
}
.footer a {
    color: #2c4055;
}

/* dialog */
.overlay {
    position: absolute;
    inset: 0;
    display: flex;
    align-items: center;
    justify-content: center;
    padding-bottom: 2px;
}
.dialog {
    background: #fff;
    border: 1px solid #333;
    box-shadow: 0 1px 5px #444;
}
.dialog-bar {
    display: flex;
    align-items: center;
    justify-content: space-between;
    height: 26px;
    padding: 0 13px 0 9px;
    border: 1px solid #222;
    background: linear-gradient(#666, #1c1c1c);
    color: #fff;
    font-size: 12px;
    font-weight: bold;
}
.dialog-close svg {
    display: block;
    width: 10px;
    height: 10px;
}
.dialog-body {
    padding: 37px 13px 14px 18px;
}
.dialog h2 {
    margin: 0 0 20px;
    font-family: "Liberation Sans", Arial, sans-serif;
    font-size: 17px;
    font-weight: normal;
    line-height: 20px;
    color: #555;
}
.question {
    display: flex;
    gap: 33px;
    margin-left: 2px;
}
.question-label {
    height: 56px;
    padding: 12px 6px;
    background: #f4f4f4;
    color: #555;
    font-weight: bold;
}
.question ul {
    padding-top: 12px;
    list-style: disc;
}
.question li {
    height: 17px;
    padding-left: 2px;
}
.question li::marker {
    font-size: 12px;
}
.question input {
    appearance: none;
    width: 13px;
    height: 13px;
    margin: 2px 6px 0 0;
    vertical-align: top;
    border: 1px solid #a9b3c0;
    border-radius: 50%;
    background: radial-gradient(#dbe7f1 3px, #fff 4px);
}
.question input:checked {
    background: radial-gradient(#79aad8 3px, #e8eff7 4px);
}
.question label {
    line-height: 15px;
}
.dialog-buttons {
    display: flex;
    gap: 9px;
    padding: 6px 0 0 5px;
}
.dialog-buttons button {
    height: 27px;
    padding: 0 8px;
    border-color: #759dc0;
    background: linear-gradient(#cfe3f8, #b8d5f2 30%, #f1f7fe);
    color: #555;
    box-shadow: 0 1px 1px #ccc;
}

/* taskbar */
.taskbar {
    display: flex;
    height: 40px;
    background: #020409;
    color: #fff;
    font-family: "Noto Sans", "Open Sans", sans-serif;
}
.start {
    width: 48px;
}
.start svg {
    width: 16px;
    height: 16px;
    vertical-align: middle;
}
.cortana {
    display: flex;
    align-items: center;
    width: 344px;
    padding: 0 14px 0 9px;
    background: #f1f1f1;
}
.cortana input {
    flex: 1;
    min-width: 0;
    border: 0;
    padding: 0;
    margin: 0 9px;
    background: none;
    font-size: 14px;
    outline: none;
}
.cortana input::placeholder {
    color: #2c2c2c;
}
.ring {
    width: 22px;
    height: 22px;
}
.mic {
    width: 12px;
    height: 18px;
}
.apps {
    display: flex;
    gap: 1px;
}
.apps button {
    width: 48px;
    padding-top: 4px;
    border-bottom: 2px solid transparent;
}
.apps button:first-child {
    margin-right: 2px;
}
.apps .open {
    border-bottom-color: #76b9ed;
}
.apps .active {
    background: #35363a;
}
.apps svg {
    width: 24px;
    height: 24px;
}
.tray {
    display: flex;
    align-items: center;
    margin-left: auto;
}
.tray > svg {
    width: 16px;
    height: 16px;
    margin-right: 8px;
}
.tray > svg:first-child {
    margin-right: 20px;
}
.clock {
    padding: 0 9px 0 1px;
    font-size: 11px;
    line-height: 18px;
    text-align: center;
}
.notify {
    position: relative;
    width: 34px;
    height: 40px;
}
.notify svg {
    width: 16px;
    height: 16px;
}
.badge {
    position: absolute;
    left: 16px;
    top: 19px;
    width: 17px;
    height: 17px;
    border: 1px solid #888;
    border-radius: 50%;
    background: #333;
    color: #fff;
    font-size: 11px;
    line-height: 15px;
}
.desktop {
    width: 5px;
    height: 40px;
    margin-left: 11px;
    border-left: 1px solid #666;
}
```
